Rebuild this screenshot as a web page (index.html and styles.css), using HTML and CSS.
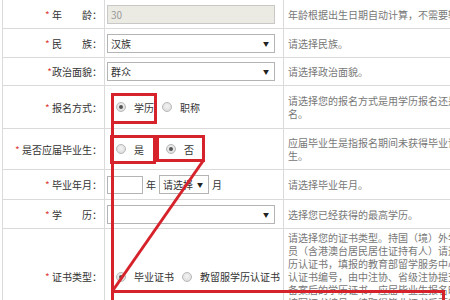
FILE: index.html
```html
<!DOCTYPE html>
<html>
<head>
<meta charset="utf-8">
<title>报名信息</title>
<link rel="stylesheet" href="styles.css">
</head>
<body>
<table class="form">
<colgroup><col class="c1"><col class="c2"><col class="c3"></colgroup>
<tr class="h29">
<td class="lbl"><span class="req">*</span> 年　　龄：</td>
<td class="fld"><span class="box ro wide">30</span></td>
<td class="tip">年龄根据出生日期自动计算，不需要输入。</td>
</tr>
<tr class="h29">
<td class="lbl"><span class="req">*</span> 民　　族：</td>
<td class="fld"><span class="box sel wide">汉族<i class="arr">▼</i></span></td>
<td class="tip">请选择民族。</td>
</tr>
<tr class="h28">
<td class="lbl"><span class="req">*</span>政治面貌：</td>
<td class="fld"><span class="box sel wide">群众<i class="arr">▼</i></span></td>
<td class="tip">请选择政治面貌。</td>
</tr>
<tr class="h43">
<td class="lbl"><span class="req">*</span> 报名方式：</td>
<td class="fld"><div class="opts"><span class="radio on"></span><span class="opt">学历</span><span class="radio"></span><span class="opt">职称</span></div></td>
<td class="tip">请选择您的报名方式是用学历报名还是职称报名。</td>
</tr>
<tr class="h41">
<td class="lbl"><span class="req">*</span> 是否应届毕业生：</td>
<td class="fld"><div class="opts"><span class="radio"></span><span class="opt far">是</span><span class="radio on"></span><span class="opt">否</span></div></td>
<td class="tip">应届毕业生是指报名期间未获得毕业证书的考生。</td>
</tr>
<tr class="h30">
<td class="lbl"><span class="req">*</span> 毕业年月：</td>
<td class="fld"><div class="ym"><span class="box year"></span><span>年</span><span class="box sel mon">请选择<i class="arr">▼</i></span><span>月</span></div></td>
<td class="tip">请选择毕业年月。</td>
</tr>
<tr class="h29">
<td class="lbl"><span class="req">*</span> 学　　历：</td>
<td class="fld"><span class="box sel wide"><i class="arr">▼</i></span></td>
<td class="tip">选择您已经获得的最高学历。</td>
</tr>
<tr>
<td class="lbl"><span class="req">*</span> 证书类型：</td>
<td class="fld"><div class="opts"><span class="radio on"></span><span class="opt">毕业证书</span><span class="radio"></span><span class="opt">教留服学历认证书</span></div></td>
<td class="tip">请选择您的证书类型。持国（境）外学历的人员（含港澳台居民居住证持有人）请选择留学历认证书，填报的教育部留学服务中心出具的认证书编号，由中注协、省级注协提交教育部备案后的学历证书，应届毕业生报名时可暂不填写证书编号，待取得毕业证书后再行补充填报。</td>
</tr>
</table>

<svg class="marks" width="450" height="300" viewBox="0 0 450 300">
<g fill="none" stroke="#d6232b" stroke-width="3">
<rect x="112.5" y="94.5" width="43" height="28"/>
<rect x="111.5" y="136.5" width="43" height="26"/>
<rect x="157.5" y="136.5" width="46" height="24"/>
<line x1="112.5" y1="122" x2="112.5" y2="300"/>
<line x1="203" y1="161" x2="112.5" y2="291"/>
<polyline points="112.5,291.5 443.5,291.5 443.5,300"/>
</g>
</svg>
</body>
</html>
```

FILE: styles.css
```css
html, body { margin:0; padding:0; overflow:hidden; }
body { width:450px; height:300px; position:relative; background:#fff; color:#333; font-family:"Noto Sans CJK SC", "Liberation Sans", sans-serif; font-size:10px; }

table.form { border-collapse:collapse; table-layout:fixed; width:491px; margin:-1px 0 0 2px; }
col.c1 { width:102px; }
col.c2 { width:179px; }
col.c3 { width:210px; }
td { border:1px solid #dadada; padding:0; vertical-align:middle; line-height:13px; }
tr.h28 { height:28px; }
tr.h29 { height:29px; }
tr.h30 { height:30px; }
tr.h41 { height:41px; }
tr.h43 { height:43px; }

td.lbl { text-align:right; padding-right:2px; white-space:nowrap; }
.req { color:#e0403c; }
td.fld { padding-left:2px; white-space:nowrap; overflow:hidden; }
td.tip { padding:2px 4px; color:#777; }

.box { display:inline-block; position:relative; box-sizing:border-box; height:19px; line-height:17px; padding-left:3px; border:1px solid #b4b4b4; background:#fff; vertical-align:middle; }
.box.wide { width:168px; }
.box.ro { background:#ebebe4; color:#999; border-color:#c8c8c8; }
.arr { position:absolute; right:5px; top:0; font-style:normal; font-size:6px; color:#222; }
.box.year { width:36px; height:18px; }
.box.mon { width:50px; }

.ym { display:flex; align-items:center; gap:3px; }

.opts { display:flex; align-items:center; padding-left:9px; }
.radio { flex:none; width:10px; height:10px; box-sizing:border-box; border-radius:50%; border:1px solid #b9b9b9; background:radial-gradient(circle at 50% 40%, #f4f4f4, #d6d6d6); margin-right:8px; position:relative; }
.radio.on::after { content:""; position:absolute; left:2px; top:2px; width:4px; height:4px; border-radius:50%; background:#555; }
.opt { flex:none; margin-right:8px; }
.opt.far { margin-right:22px; }

svg.marks { position:absolute; left:0; top:0; pointer-events:none; }
```
